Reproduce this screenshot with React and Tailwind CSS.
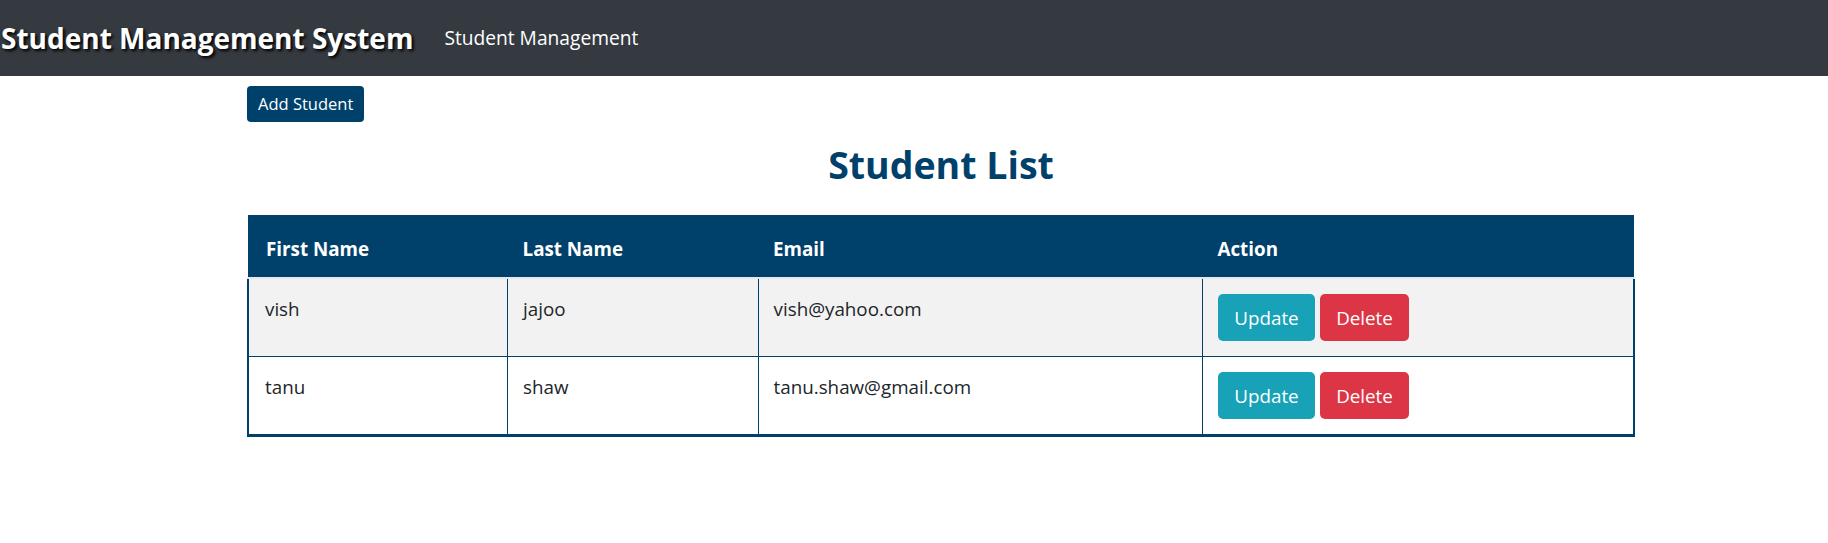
import React from "react";

const students = [
  { id: 1, firstName: "vish", lastName: "jajoo", email: "vish@yahoo.com" },
  { id: 2, firstName: "tanu", lastName: "shaw", email: "tanu.shaw@gmail.com" },
];

function Navbar() {
  return (
    <nav className="h-[76px] bg-[#343a40] flex items-center">
      <span className="text-white font-bold text-[28px] leading-none [text-shadow:2px_2px_3px_#000] pl-[1px]">
        Student Management System
      </span>
      <a href="#" className="ml-[31px] text-white text-[19.2px] leading-none">
        Student Management
      </a>
    </nav>
  );
}

export default function App() {
  return (
    <div
      className="min-h-screen bg-white text-[#212529]"
      style={{ fontFamily: '"Open Sans", "Noto Sans", sans-serif' }}
    >
      <Navbar />
      <div className="ml-[247px] w-[1388px]">
        <button className="mt-[10px] h-[36px] px-[11px] bg-[#00416b] text-white text-[16.5px] rounded-[4px]">
          Add Student
        </button>

        <h2 className="mt-[19px] mb-[26px] text-center text-[37.5px] leading-[48px] font-bold text-[#00416b]">
          Student List
        </h2>

        <table className="w-full border-collapse text-[18.8px] leading-[30px]">
          <colgroup>
            <col className="w-[260px]" />
            <col className="w-[251px]" />
            <col className="w-[445px]" />
            <col className="w-[432px]" />
          </colgroup>
          <thead>
            <tr className="bg-[#00416b] text-white">
              <th className="text-left font-bold pt-[19px] pb-[13px] pl-[18px] border-b-2 border-[#e4e8ec]">First Name</th>
              <th className="text-left font-bold pt-[19px] pb-[13px] pl-[15px] border-b-2 border-[#e4e8ec]">Last Name</th>
              <th className="text-left font-bold pt-[19px] pb-[13px] pl-[15px] border-b-2 border-[#e4e8ec]">Email</th>
              <th className="text-left font-bold pt-[19px] pb-[13px] pl-[15px] border-b-2 border-[#e4e8ec]">Action</th>
            </tr>
          </thead>
          <tbody>
            {students.map((s, i) => {
              const last = i === students.length - 1;
              return (
                <tr
                  key={s.id}
                  className={`${i % 2 === 0 ? "bg-[#f2f2f2]" : "bg-white"} ${
                    last ? "border-b-[3px]" : "border-b"
                  } border-[#00416b]`}
                >
                  <td className="align-top p-[15px] pl-[16px] border-l-2 border-[#00416b]">{s.firstName}</td>
                  <td className="align-top p-[15px] border-l border-[#00416b]">{s.lastName}</td>
                  <td className="align-top p-[15px] border-l border-[#00416b]">{s.email}</td>
                  <td className="align-top p-[15px] border-l border-r-2 border-[#00416b]">
                    <div className="flex gap-[5px]">
                      <button className="h-[47px] w-[97px] bg-[#17a2b8] text-white rounded-[5px]">
                        Update
                      </button>
                      <button className="h-[47px] w-[89px] bg-[#dc3545] text-white rounded-[5px]">
                        Delete
                      </button>
                    </div>
                  </td>
                </tr>
              );
            })}
          </tbody>
        </table>
      </div>
    </div>
  );
}
